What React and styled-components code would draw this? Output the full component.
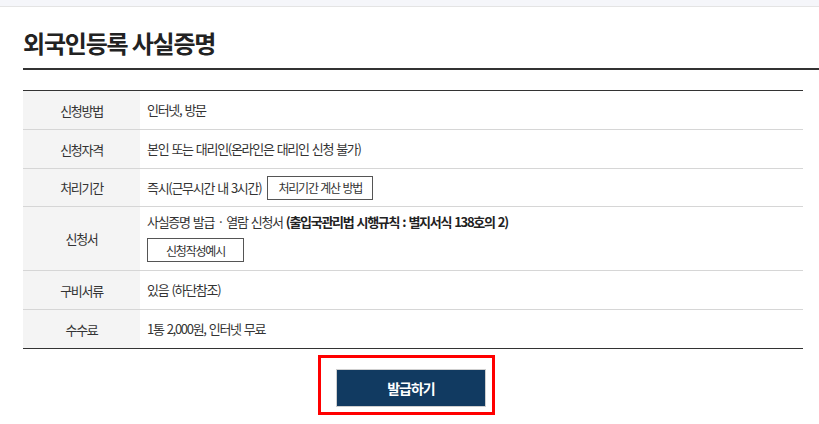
import React from 'react'
import styled, { createGlobalStyle } from 'styled-components'

const GlobalStyle = createGlobalStyle`
    body {
        margin: 0;
        background: #ffffff;
        font-family: "Noto Sans CJK KR", "Noto Sans", sans-serif;
        color: #333333;
    }
`

const TopStrip = styled.div`
    height: 6px;
    background-color: #f5f6fa;
    border-bottom: 1px solid #e4e4e4;
`

const Page = styled.div`
    padding-left: 23px;
`

const Title = styled.h2`
    margin: 21px 0 0 0;
    padding-bottom: 10px;
    font-size: 24px;
    line-height: 30px;
    font-weight: 700;
    letter-spacing: -1.2px;
    color: #222222;
    border-bottom: 2px solid #333333;
`

const Table = styled.div`
    width: 780px;
    margin-top: 20px;
    border-top: 1px solid #333333;
    border-bottom: 1px solid #333333;
`

const Row = styled.div`
    display: grid;
    grid-template-columns: 117px 1fr;
    min-height: ${p => p.h || 38}px;
    border-bottom: 1px solid #d6d6d6;
    &:last-child {
        border-bottom: none;
    }
`

const Head = styled.div`
    display: flex;
    align-items: center;
    justify-content: center;
    background-color: #f4f4f4;
    font-size: 13px;
    letter-spacing: -1.3px;
    color: #333333;
`

const Cell = styled.div`
    display: flex;
    flex-direction: ${p => (p.stack ? 'column' : 'row')};
    align-items: ${p => (p.stack ? 'flex-start' : 'center')};
    justify-content: center;
    justify-content: ${p => (p.stack ? 'center' : 'flex-start')};
    gap: ${p => (p.stack ? '5px' : '6px')};
    padding: ${p => (p.stack ? '4px 7px 8px' : '0 7px')};
    font-size: 13px;
    letter-spacing: -1.3px;
    word-spacing: 1.5px;
    line-height: 22px;
    color: #333333;
`

const Strong = styled.b`
    font-weight: 700;
    color: #222222;
`

const SmallButton = styled.button`
    width: ${p => p.w}px;
    height: 24px;
    padding: 0;
    background: #ffffff;
    border: 1px solid #555555;
    font-family: inherit;
    font-size: 12px;
    letter-spacing: -1.2px;
    word-spacing: 1px;
    color: #333333;
    cursor: pointer;
`

const ActionRow = styled.div`
    width: 780px;
    display: flex;
    padding-left: 295px;
    margin-top: 6px;
    box-sizing: border-box;
`

const Highlight = styled.div`
    border: 3px solid #ff0000;
    padding: 11px 6px 5px 15px;
`

const IssueButton = styled.button`
    display: block;
    width: 150px;
    height: 38px;
    background-color: #113a61;
    border: 1px solid #cfcfcf;
    color: #ffffff;
    font-family: inherit;
    font-size: 14px;
    font-weight: 700;
    letter-spacing: -1px;
    cursor: pointer;
`

export default function App() {
    return (
        <>
            <GlobalStyle />
            <TopStrip />
            <Page>
                <Title>외국인등록 사실증명</Title>
                <Table>
                    <Row>
                        <Head>신청방법</Head>
                        <Cell>인터넷, 방문</Cell>
                    </Row>
                    <Row>
                        <Head>신청자격</Head>
                        <Cell>본인 또는 대리인(온라인은 대리인 신청 불가)</Cell>
                    </Row>
                    <Row h={37}>
                        <Head>처리기간</Head>
                        <Cell>
                            즉시(근무시간 내 3시간)
                            <SmallButton w={106}>처리기간 계산 방법</SmallButton>
                        </Cell>
                    </Row>
                    <Row h={63}>
                        <Head>신청서</Head>
                        <Cell stack>
                            <span>
                                사실증명 발급 · 열람 신청서 <Strong>(출입국관리법 시행규칙 : 별지서식 138호의 2)</Strong>
                            </span>
                            <SmallButton w={97}>신청작성예시</SmallButton>
                        </Cell>
                    </Row>
                    <Row>
                        <Head>구비서류</Head>
                        <Cell>있음 (하단참조)</Cell>
                    </Row>
                    <Row>
                        <Head>수수료</Head>
                        <Cell>1통 2,000원, 인터넷 무료</Cell>
                    </Row>
                </Table>
                <ActionRow>
                    <Highlight>
                        <IssueButton>발급하기</IssueButton>
                    </Highlight>
                </ActionRow>
            </Page>
        </>
    )
}
